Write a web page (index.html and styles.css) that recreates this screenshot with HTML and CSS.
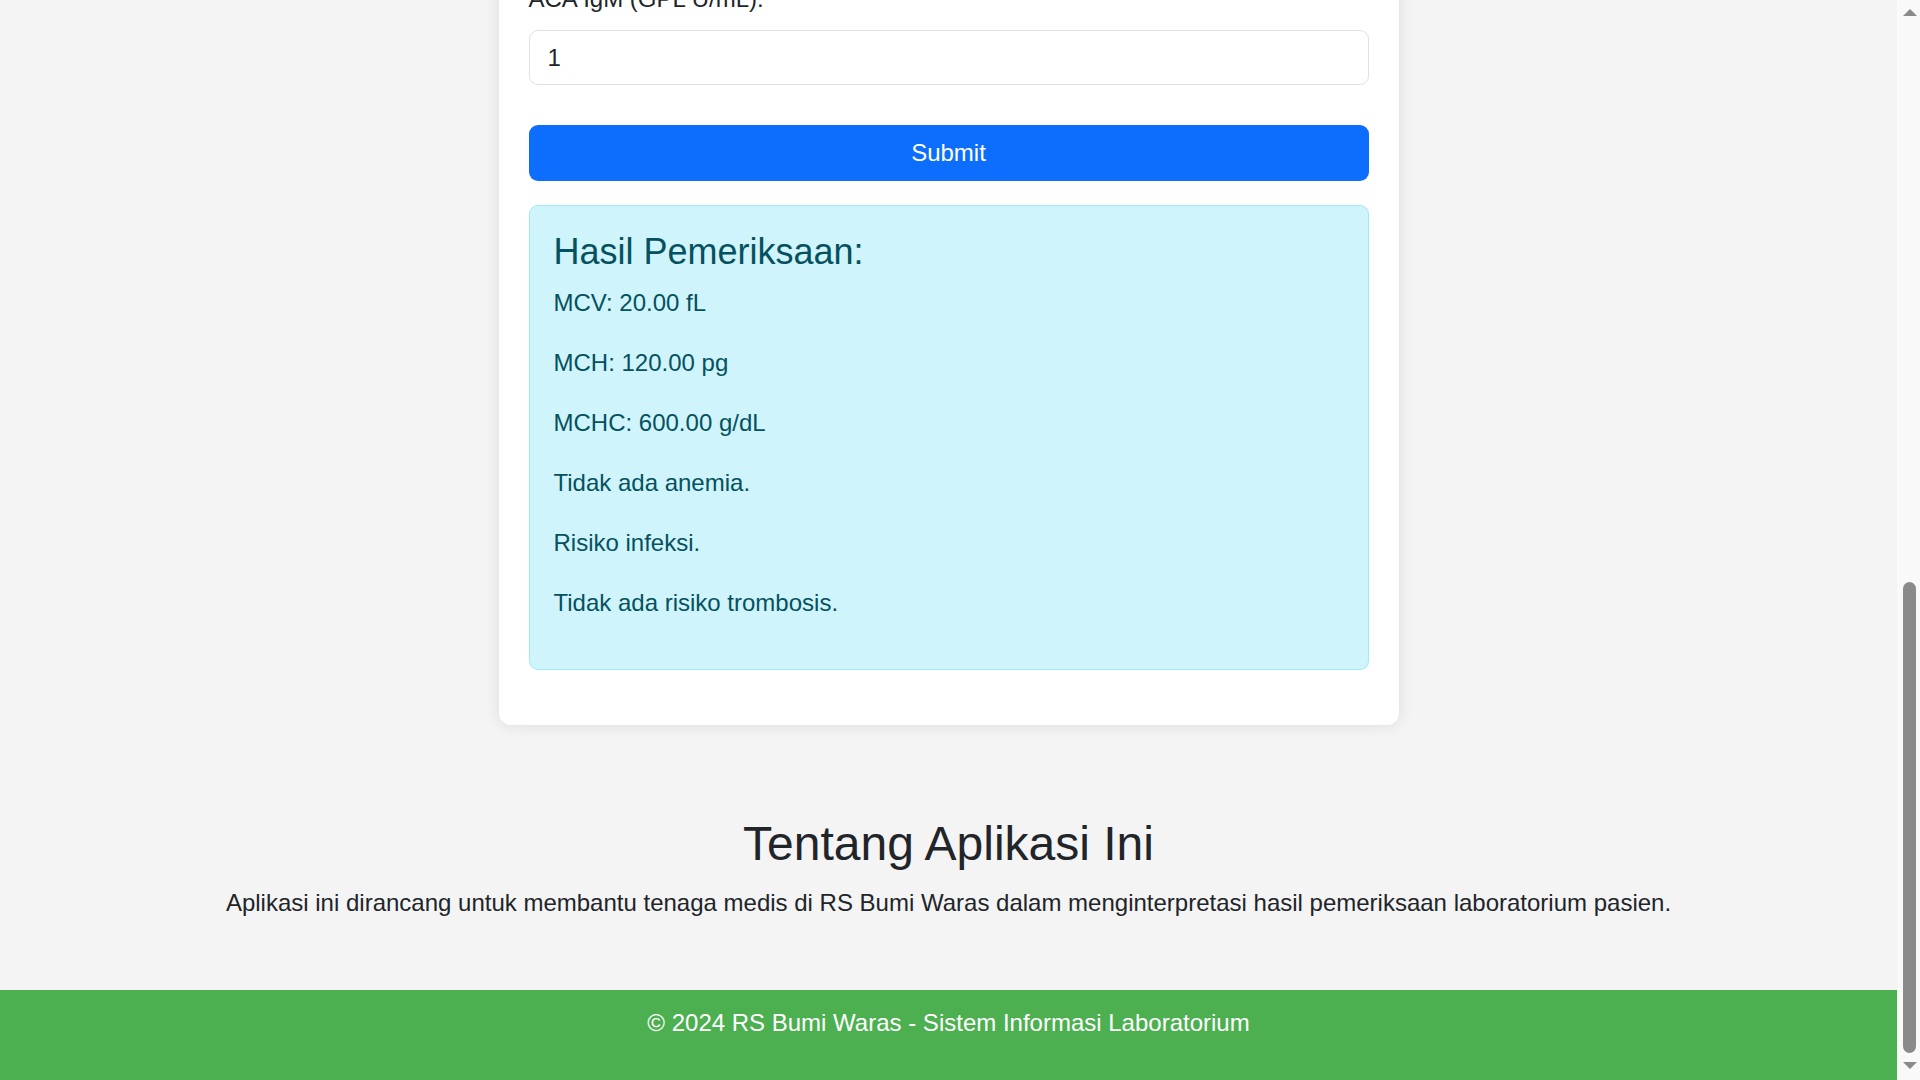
FILE: index.html
```html
<!DOCTYPE html>
<html lang="id">
<head>
<meta charset="utf-8">
<title>RS Bumi Waras - Sistem Informasi Laboratorium</title>
<link rel="stylesheet" href="styles.css">
</head>
<body>
<div class="viewport">
  <main class="container">
    <form class="card">
      <label class="form-label" for="aca-igm">ACA IgM (GPL U/mL):</label>
      <input class="form-control" id="aca-igm" type="text" value="1">
      <button class="btn-submit" type="button">Submit</button>
      <div class="alert">
        <h4 class="alert-heading">Hasil Pemeriksaan:</h4>
        <p>MCV: 20.00 fL</p>
        <p>MCH: 120.00 pg</p>
        <p>MCHC: 600.00 g/dL</p>
        <p>Tidak ada anemia.</p>
        <p>Risiko infeksi.</p>
        <p>Tidak ada risiko trombosis.</p>
      </div>
    </form>
  </main>
  <section class="about">
    <h2>Tentang Aplikasi Ini</h2>
    <p>Aplikasi ini dirancang untuk membantu tenaga medis di RS Bumi Waras dalam menginterpretasi hasil pemeriksaan laboratorium pasien.</p>
  </section>
  <footer class="footer">
    <p>&copy; 2024 RS Bumi Waras - Sistem Informasi Laboratorium</p>
  </footer>
</div>
<div class="scrollbar">
  <div class="arrow arrow-up"></div>
  <div class="track-space"></div>
  <div class="thumb"></div>
  <div class="arrow arrow-down"></div>
</div>
</body>
</html>
```
FILE: styles.css
```css
* { box-sizing: border-box; }

html, body {
  margin: 0;
  height: 1080px;
  overflow: hidden;
}

body {
  display: flex;
  background: #f4f4f4;
  font-family: "Liberation Sans", Arial, sans-serif;
  font-size: 24px;
  line-height: 1.5;
  color: #212529;
}

.viewport {
  flex: 1;
  height: 1080px;
  display: flex;
  flex-direction: column;
  justify-content: flex-end;
  overflow: hidden;
}

.container {
  display: flex;
  justify-content: center;
  flex-shrink: 0;
}

.card {
  width: 900px;
  background: #fff;
  border-radius: 12px;
  box-shadow: 0 0 15px rgba(0, 0, 0, 0.1);
  padding: 30px 30px 31px;
  display: flex;
  flex-direction: column;
}

.form-label {
  display: block;
  margin-bottom: 13px;
}

.form-control {
  height: 55px;
  border: 1px solid #dee2e6;
  border-radius: 9px;
  padding: 0 18px;
  font-family: inherit;
  font-size: 24px;
  color: #212529;
  background: #fff;
  margin-bottom: 40px;
}

.btn-submit {
  height: 56px;
  border: none;
  border-radius: 9px;
  background: #0d6efd;
  color: #fff;
  font-family: inherit;
  font-size: 24px;
  margin-bottom: 24px;
}

.alert {
  background: #cff4fc;
  border: 1px solid #9eeaf9;
  border-radius: 9px;
  color: #055160;
  padding: 24px;
  margin-bottom: 24px;
}

.alert-heading {
  margin: 0 0 12px;
  font-size: 36px;
  font-weight: 400;
  line-height: 1.2;
}

.alert p {
  margin: 0 0 24px;
}

.about {
  flex-shrink: 0;
  text-align: center;
  padding: 90px 0 69px;
}

.about h2 {
  margin: 0 0 12px;
  font-size: 48px;
  font-weight: 400;
  line-height: 1.2;
}

.about p {
  margin: 0;
}

.footer {
  flex-shrink: 0;
  background: #4caf50;
  color: #fff;
  text-align: center;
  padding: 15px 0;
}

.footer p {
  margin: 0 0 24px;
}

.scrollbar {
  width: 23px;
  height: 1080px;
  background: #f9f9f9;
  display: flex;
  flex-direction: column;
  align-items: center;
  padding-left: 2px;
}

.arrow {
  width: 0;
  height: 0;
  border-left: 7px solid transparent;
  border-right: 7px solid transparent;
}

.arrow-up {
  margin-top: 9px;
  border-bottom: 7px solid #8a8a8a;
}

.arrow-down {
  margin-top: 9px;
  border-top: 7px solid #8a8a8a;
}

.track-space {
  height: 566px;
}

.thumb {
  width: 13px;
  height: 471px;
  background: #8a8a8a;
  border-radius: 7px;
}
```
